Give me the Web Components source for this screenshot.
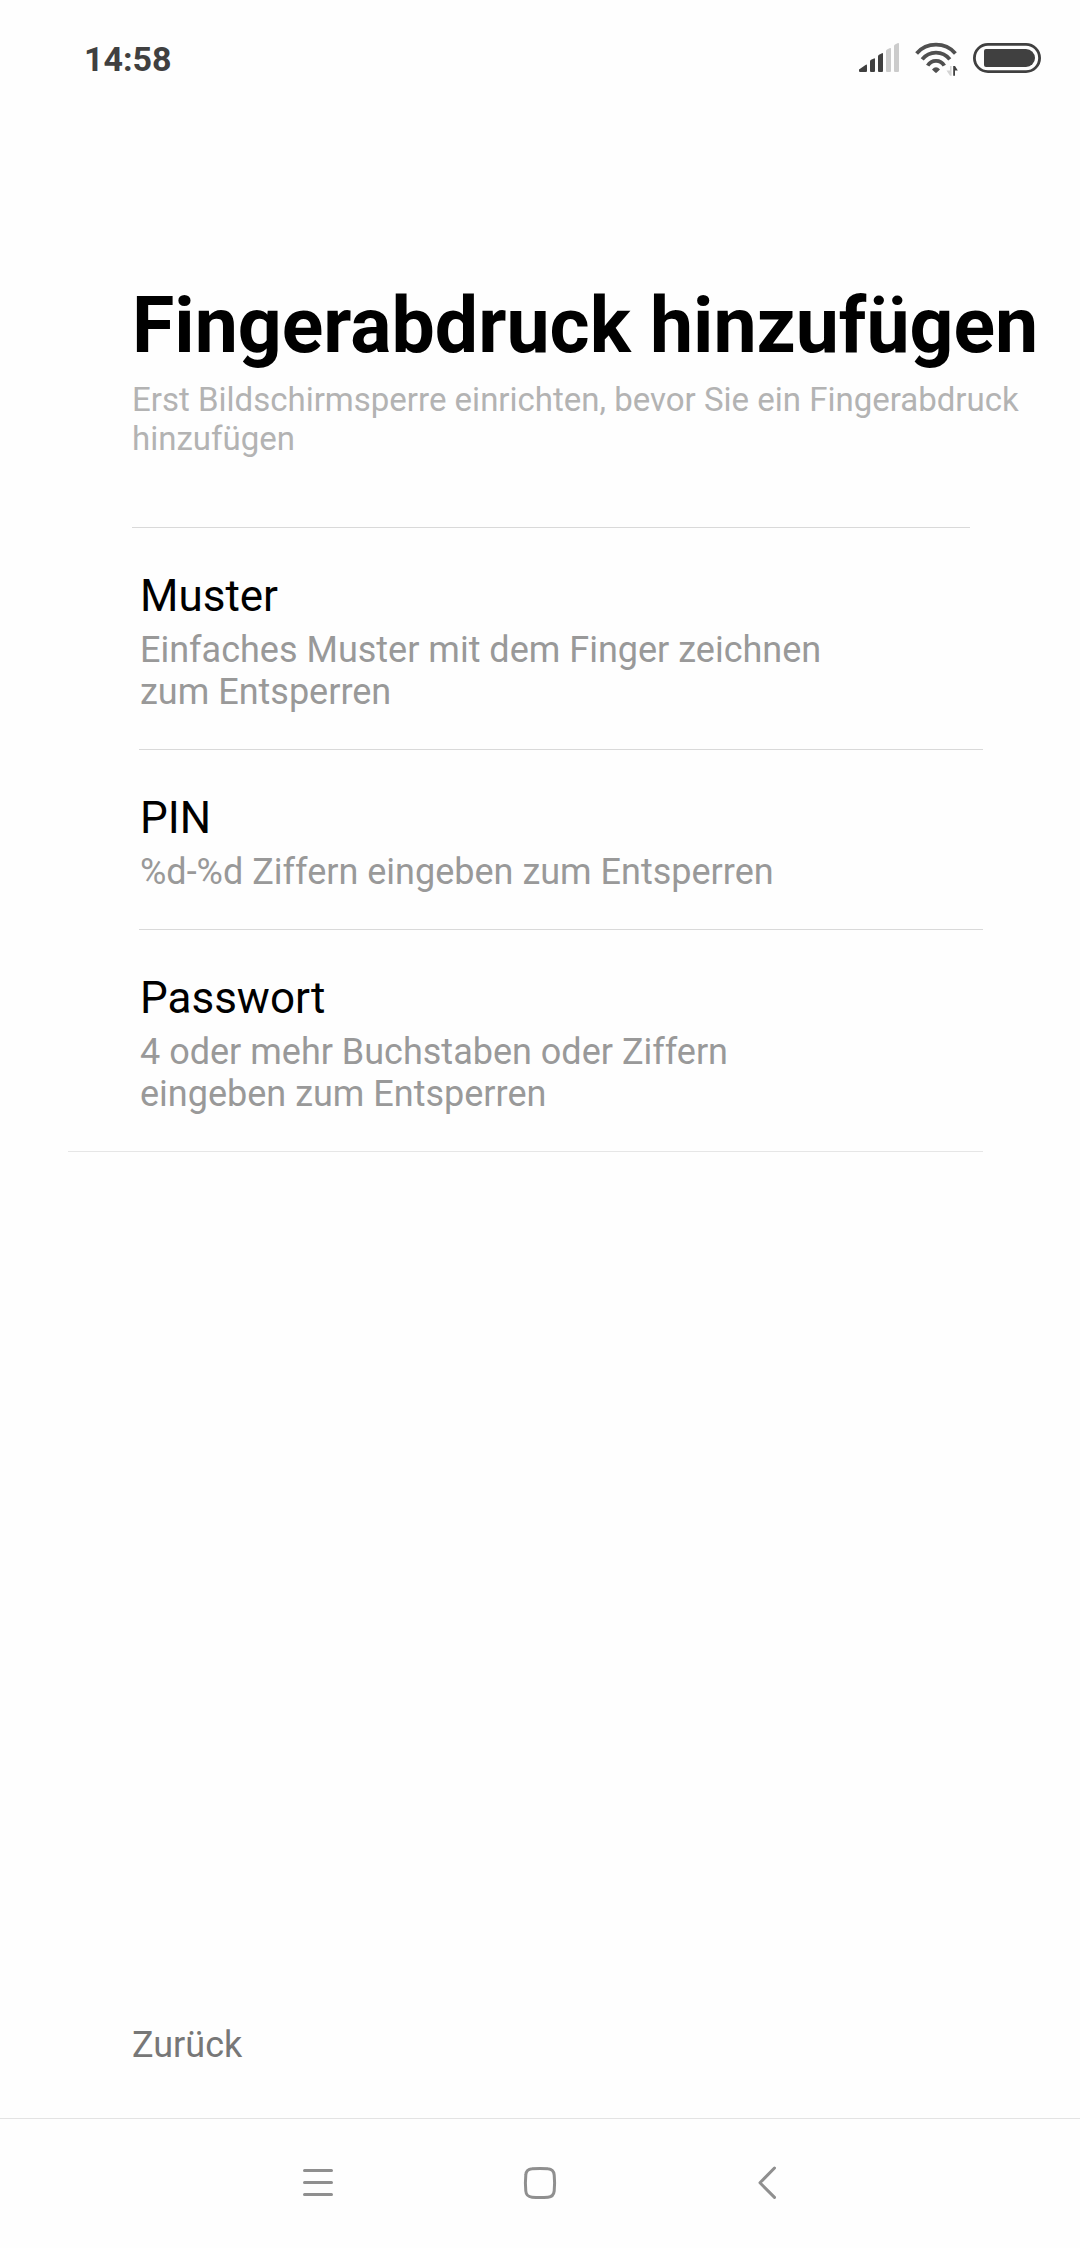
<!DOCTYPE html>
<html lang="de">
<head>
<meta charset="utf-8">
<meta name="viewport" content="width=device-width, initial-scale=1">
<title>Fingerabdruck hinzufügen</title>
<style>
  body {
    margin: 0;
    background: #fefefe;
    color: #000;
    font-family: Roboto, "Noto Sans", sans-serif;
  }
</style>
</head>
<body>
<setup-screen>
  <status-bar slot="status" time="14:58"></status-bar>
  <page-header>
    <span slot="title">Fingerabdruck hinzufügen</span>
    <span slot="summary">Erst Bildschirmsperre einrichten, bevor Sie ein Fingerabdruck hinzufügen</span>
  </page-header>
  <lock-list>
    <lock-option>
      Muster
      <span slot="summary">Einfaches Muster mit dem Finger zeichnen zum Entsperren</span>
    </lock-option>
    <lock-option>
      PIN
      <span slot="summary">%d-%d Ziffern eingeben zum Entsperren</span>
    </lock-option>
    <lock-option last>
      Passwort
      <span slot="summary">4 oder mehr Buchstaben oder Ziffern eingeben zum Entsperren</span>
    </lock-option>
  </lock-list>
  <back-button slot="footer">Zurück</back-button>
  <nav-bar slot="footer"></nav-bar>
</setup-screen>

<script>
(function () {
  function define(name, html, setup) {
    const template = document.createElement("template");
    template.innerHTML = html;

    customElements.define(name, class extends HTMLElement {
      constructor() {
        super();
        this.attachShadow({ mode: "open" });
        this.shadowRoot.appendChild(template.content.cloneNode(true));
      }

      connectedCallback() {
        if (setup) setup(this);
      }
    });
  }

  define("setup-screen", `
    <style>
      :host {
        display: flex;
        flex-direction: column;
        min-height: 100vh;
      }
      main {
        flex: 1;
      }
    </style>
    <slot name="status"></slot>
    <main><slot></slot></main>
    <slot name="footer"></slot>
  `);

  define("status-bar", `
    <style>
      :host {
        display: flex;
        align-items: center;
        justify-content: space-between;
        height: 118px;
        padding: 0 39px 0 84px;
        color: #404040;
      }
      time {
        font-size: 34px;
        line-height: 40px;
        font-weight: 700;
      }
      .icons {
        display: flex;
        gap: 15px;
      }
      svg {
        display: block;
      }
    </style>
    <time></time>
    <div class="icons">
      <svg width="41" height="40" viewBox="0 0 41 40" role="img" aria-label="Mobilfunk">
        <g fill="#404040">
          <path d="M0 30.6 L6.5 26 Q8 25 8 26.5 V32 Q8 33 7 33 H1 Q0 33 0 32Z"/>
          <path d="M11 22.2 Q11 21.2 12 20.7 L15 19.4 Q16 19 16 20.5 V32 Q16 33 15 33 H12 Q11 33 11 32Z"/>
          <path d="M19 17.2 Q19 16.2 20 15.7 L23 14.2 Q24 13.8 24 15 V32 Q24 33 23 33 H20 Q19 33 19 32Z"/>
        </g>
        <g fill="#ccc">
          <path d="M27 12 Q27 11 28 10.5 L31 9 Q32 8.6 32 10 V32 Q32 33 31 33 H28 Q27 33 27 32Z"/>
          <path d="M35 7 Q35 6 36 5.4 L39 4.1 Q40 3.8 40 5 V32 Q40 33 39 33 H36 Q35 33 35 32Z"/>
        </g>
      </svg>
      <svg width="43" height="40" viewBox="0 0 43 40" role="img" aria-label="WLAN">
        <g fill="none" stroke="#505050" stroke-width="3.8">
          <path d="M1.6 14.4 A26 26 0 0 1 40.4 14.4"/>
          <path d="M7.2 20.4 A17.4 17.4 0 0 1 34.8 20.4"/>
          <path d="M12.7 26.6 A9.6 9.6 0 0 1 29.3 26.6"/>
        </g>
        <path d="M17 30.4 Q21 26 25 30.4 L21.8 33.6 Q21 34.2 20.2 33.6Z" fill="#505050"/>
        <path d="M35 27 H36.6 V36.7 H35 L31.5 31.6 H35Z" fill="#d4d4d4"/>
        <path d="M38.2 27 H40 L42.8 31.6 H40 V36.7 H38.2Z" fill="#404040"/>
      </svg>
      <svg width="68" height="40" viewBox="0 0 68 40" role="img" aria-label="Akku">
        <rect x="1.4" y="5.4" width="65.2" height="27.2" rx="13.6" fill="none" stroke="#404040" stroke-width="2.8"/>
        <path d="M13 10 H53 A9 9 0 0 1 53 28 H13 Q11 28 11 26 V12 Q11 10 13 10Z" fill="#404040"/>
      </svg>
    </div>
  `, (el) => {
    el.shadowRoot.querySelector("time").textContent = el.getAttribute("time");
  });

  define("page-header", `
    <style>
      :host {
        display: block;
        padding-top: 163px;
      }
      h1, p {
        margin: 0 30px 0 132px;
      }
      h1 {
        font-size: 77px;
        line-height: 90px;
        font-weight: 700;
      }
      p {
        margin-top: 9px;
        color: #b3b3b3;
        font-size: 33px;
        line-height: 39px;
      }
      .line {
        height: 1px;
        margin: 69px 110px 0 132px;
        background: #d9d9d9;
      }
    </style>
    <h1><slot name="title"></slot></h1>
    <p><slot name="summary"></slot></p>
    <div class="line"></div>
  `);

  define("lock-list", `
    <style>
      :host {
        display: block;
        padding: 0 97px 0 68px;
      }
    </style>
    <slot></slot>
  `);

  define("lock-option", `
    <style>
      :host {
        display: block;
        padding-left: 71px;
        --line: #d9d9d9;
      }
      /* the closing line runs out to the list edge */
      :host([last]) {
        padding-left: 0;
        --indent: 71px;
        --line: #e6e6e6;
      }
      button {
        display: block;
        width: 100%;
        margin: 0;
        padding: 42px 143px 36px calc(var(--indent, 0px) + 1px);
        border: 0;
        border-bottom: 1px solid var(--line);
        background: none;
        color: #000;
        font: inherit;
        text-align: left;
        cursor: pointer;
      }
      .title, .summary {
        display: block;
      }
      .title {
        font-size: 44px;
        line-height: 52px;
      }
      .summary {
        margin-top: 7px;
        color: #999;
        font-size: 36px;
        line-height: 42px;
      }
    </style>
    <button type="button">
      <span class="title"><slot></slot></span>
      <span class="summary"><slot name="summary"></slot></span>
    </button>
  `);

  define("back-button", `
    <style>
      :host {
        display: block;
        padding: 0 132px 52px;
      }
      button {
        display: block;
        margin: 0;
        padding: 0;
        border: 0;
        background: none;
        color: #777;
        font: inherit;
        font-size: 36px;
        line-height: 42px;
        cursor: pointer;
      }
    </style>
    <button type="button"><slot></slot></button>
  `);

  define("nav-bar", `
    <style>
      :host {
        display: block;
        border-top: 1px solid #e3e3e3;
      }
      nav {
        display: flex;
        justify-content: center;
      }
      button {
        display: flex;
        justify-content: center;
        width: 222px;
        margin: 0;
        padding: 40px 0 41px;
        border: 0;
        background: none;
        cursor: pointer;
      }
      svg {
        fill: none;
        stroke: #8f8f8f;
        stroke-width: 3;
        stroke-linecap: round;
        stroke-linejoin: round;
      }
    </style>
    <nav>
      <button type="button" aria-label="Menü">
        <svg width="48" height="48" viewBox="0 0 48 48"><path d="M10.5 11.6H37.5M10.5 23.6H37.5M10.5 35.6H37.5"/></svg>
      </button>
      <button type="button" aria-label="Startseite">
        <svg width="48" height="48" viewBox="0 0 48 48"><path d="M16 9.8 Q24 9 32 9.8 Q37.6 10.2 38.2 16 Q39 24 38.2 32 Q37.6 37.6 32 38.2 Q24 39 16 38.2 Q10.2 37.6 9.8 32 Q9 24 9.8 16 Q10.2 10.2 16 9.8Z"/></svg>
      </button>
      <button type="button" aria-label="Zurück">
        <svg width="48" height="48" viewBox="0 0 48 48"><path d="M36.5 9 L22 23.8 L36.5 38.4"/></svg>
      </button>
    </nav>
  `);
})();
</script>
</body>
</html>
